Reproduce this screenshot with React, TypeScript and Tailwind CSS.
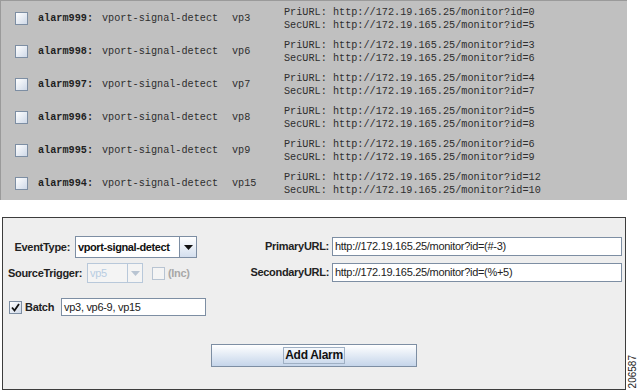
import React from "react";

const alarms = [
  { id: "alarm999", port: "vp3", pri: "0", sec: "5" },
  { id: "alarm998", port: "vp6", pri: "3", sec: "6" },
  { id: "alarm997", port: "vp7", pri: "4", sec: "7" },
  { id: "alarm996", port: "vp8", pri: "5", sec: "8" },
  { id: "alarm995", port: "vp9", pri: "6", sec: "9" },
  { id: "alarm994", port: "vp15", pri: "12", sec: "10" },
];

function Box({ checked, disabled }: { checked?: boolean; disabled?: boolean }) {
  return (
    <span
      className={
        "flex h-[13px] w-[13px] shrink-0 items-center justify-center border " +
        (disabled
          ? "border-[#b8c4d2] bg-[#f4f4f4]"
          : "border-[#7d8ea3] bg-gradient-to-br from-white to-[#cfd9e8]")
      }
    >
      {checked && (
        <svg width="9" height="9" viewBox="0 0 9 9">
          <path d="M1 4.5 L3.5 7.5 L8 1" fill="none" stroke="#111" strokeWidth="1.8" />
        </svg>
      )}
    </span>
  );
}

function Arrow({ color }: { color: string }) {
  return (
    <svg width="9" height="5" viewBox="0 0 9 5">
      <path d="M0 0 H9 L4.5 5 Z" fill={color} />
    </svg>
  );
}

export default function App() {
  return (
    <div className="h-[392px] w-[639px] overflow-hidden bg-white">
      {/* alarm list */}
      <div className="h-[200px] w-[627px] border-l border-t border-[#9a9a9a] bg-[#c0c0c0] pt-[1px] font-['Liberation_Mono',monospace] text-[10.2px] text-[#2e2e2e]">
        {alarms.map((a) => (
          <div key={a.id} className="flex h-[33px] items-center">
            <div className="ml-[14px] mr-[10px]">
              <Box />
            </div>
            <span className="w-[64px] font-bold text-[#1e1e1e]">{a.id}:</span>
            <span className="w-[130px]">vport-signal-detect</span>
            <span className="w-[52px]">{a.port}</span>
            <div className="flex flex-col leading-[13px]">
              <span>PriURL: http://172.19.165.25/monitor?id={a.pri}</span>
              <span>SecURL: http://172.19.165.25/monitor?id={a.sec}</span>
            </div>
          </div>
        ))}
      </div>

      {/* add alarm form */}
      <div className="mt-[17px] flex">
        <div className="ml-[2px] h-[173px] w-[624px] border border-[#3c3c3c] bg-[#eeeeee] font-['Liberation_Sans',Arial,sans-serif] text-[11px] tracking-[-0.3px] text-[#222]">
          <div className="flex">
            <div className="flex w-[230px] flex-col">
              <div className="mt-[18px] flex h-[22px] items-center">
                <span className="w-[67px] whitespace-nowrap text-right font-bold">EventType:</span>
                <div className="ml-[5px] flex h-[22px] w-[122px] border border-[#7d8ea3] bg-white">
                  <span className="flex flex-1 items-center whitespace-nowrap pl-[2px] text-[11px] font-bold tracking-[-0.4px] text-[#111]">
                    vport-signal-detect
                  </span>
                  <span className="flex w-[17px] shrink-0 items-center justify-center border-l border-[#7d8ea3] bg-gradient-to-b from-white to-[#d4dfee]">
                    <Arrow color="#111" />
                  </span>
                </div>
              </div>
              <div className="mt-[5px] flex h-[20px] items-center">
                <span className="w-[79px] whitespace-nowrap text-right font-bold">SourceTrigger:</span>
                <div className="ml-[5px] flex h-[20px] w-[56px] border border-[#b8c8da] bg-[#f4f4f4]">
                  <span className="flex flex-1 items-center pl-[2px] text-[#b8cde2]">vp5</span>
                  <span className="flex w-[15px] items-center justify-center border-l border-[#b8c8da]">
                    <Arrow color="#b8c4d2" />
                  </span>
                </div>
                <div className="ml-[9px]">
                  <Box disabled />
                </div>
                <span className="ml-[3px] font-bold text-[#a8a8a8]">(Inc)</span>
              </div>
              <div className="mt-[15px] flex h-[18px] items-center">
                <div className="ml-[6px]">
                  <Box checked />
                </div>
                <span className="ml-[3px] text-[11px] font-bold">Batch</span>
                <div className="ml-[7px] flex h-[18px] w-[145px] items-center border border-[#7d8ea3] bg-white pl-[2px] text-[#222]">
                  vp3, vp6-9, vp15
                </div>
              </div>
            </div>
            <div className="flex flex-1 flex-col">
              <div className="mt-[19px] flex h-[19px] items-center">
                <span className="w-[96px] text-right font-bold">PrimaryURL:</span>
                <div className="ml-[3px] flex h-[19px] w-[290px] items-center border border-[#7d8ea3] bg-white pl-[2px]">
                  http://172.19.165.25/monitor?id=(#-3)
                </div>
              </div>
              <div className="mt-[7px] flex h-[19px] items-center">
                <span className="w-[96px] text-right font-bold">SecondaryURL:</span>
                <div className="ml-[3px] flex h-[19px] w-[290px] items-center border border-[#7d8ea3] bg-white pl-[2px]">
                  http://172.19.165.25/monitor?id=(%+5)
                </div>
              </div>
            </div>
          </div>
          <div className="mt-[28px] flex justify-center">
            <button className="flex h-[23px] w-[206px] items-center justify-center border border-[#7d8ea3] bg-gradient-to-b from-white to-[#c5d5ea]">
              <span className="border border-[#9fb0c4] px-[1px] text-[12px] font-bold leading-[15px] text-[#111]">
                Add Alarm
              </span>
            </button>
          </div>
        </div>
        <div className="flex flex-1 items-end justify-center pb-[2px]">
          <span className="rotate-180 font-['Liberation_Sans',Arial,sans-serif] text-[10px] leading-[10px] text-[#222] [writing-mode:vertical-rl]">
            206587
          </span>
        </div>
      </div>
    </div>
  );
}
